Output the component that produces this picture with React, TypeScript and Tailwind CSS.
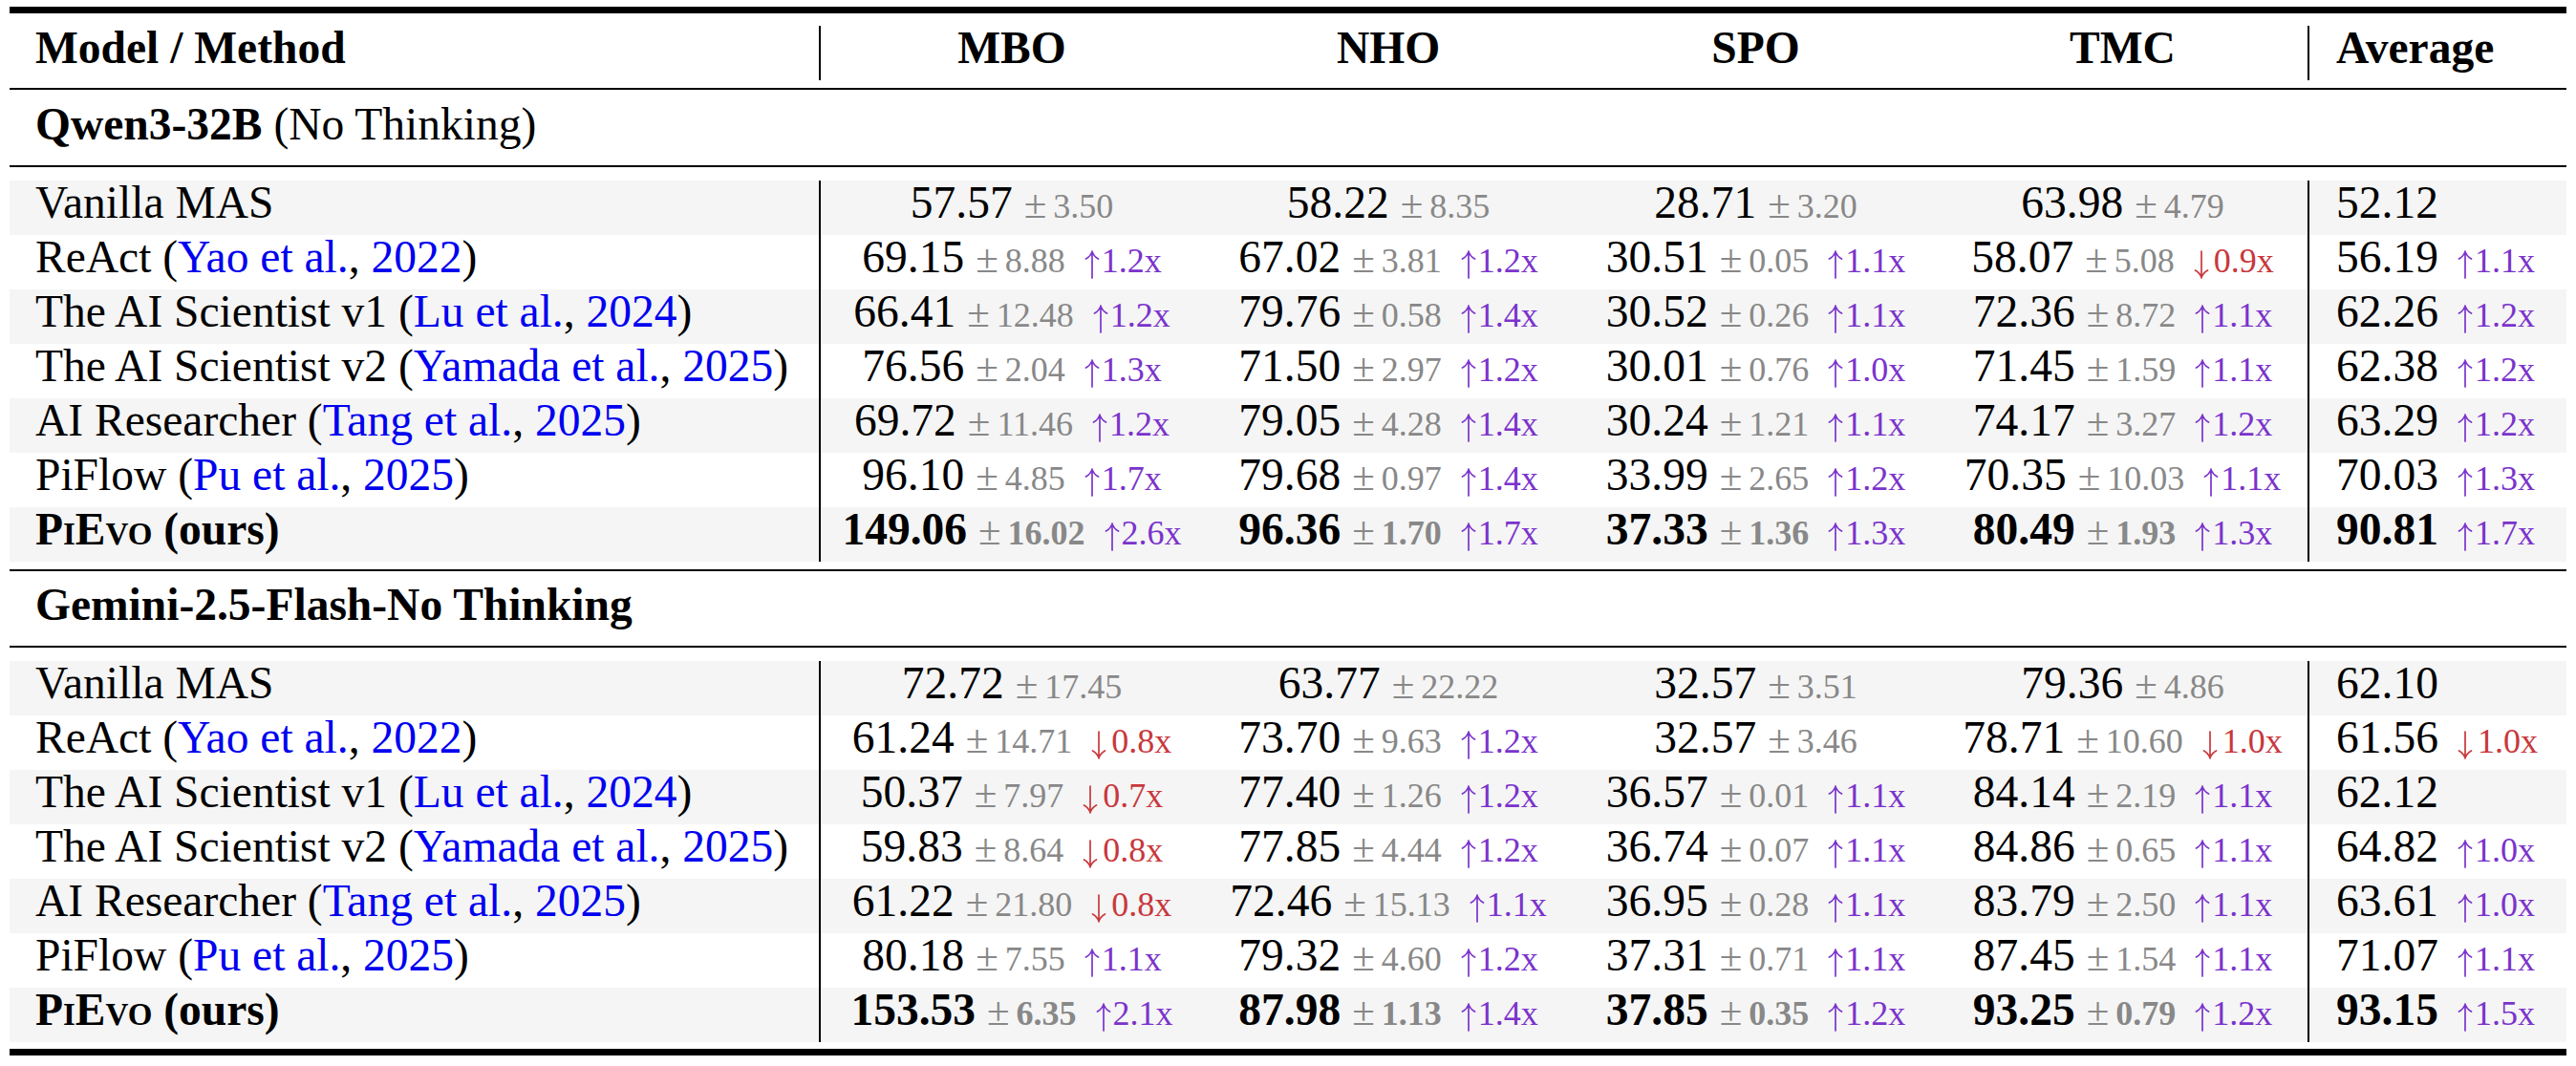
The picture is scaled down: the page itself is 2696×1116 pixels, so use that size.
import React from "react";

type Cell = [string, string?, string?];

type Row = {
  name: React.ReactNode;
  cells: Cell[];
  avg: [string, string?];
  bold?: boolean;
};

const cols = "grid grid-cols-[847px_402px_388px_381px_387px_271px]";

const cite = (who: string, year: string) => (
  <>
    {" "}(<span className="text-[#0000f0]">{who}</span>,{" "}
    <span className="text-[#0000f0]">{year}</span>)
  </>
);

const pievo = (
  <>
    <span className="[font-variant-caps:small-caps]">PiEvo</span> (ours)
  </>
);

// math-style arrow with curved barbs
const Arrow = ({ down }: { down: boolean }) => (
  <svg
    viewBox="0 0 18 30"
    className="inline-block h-[30px] w-[18px] align-[-7px]"
    fill="none"
    stroke="currentColor"
    strokeWidth="1.7"
    strokeLinecap="round"
  >
    {down ? (
      <path d="M9 1v27M2.5 21c3 1.6 5.2 4 6.5 7.5 1.3-3.5 3.5-5.9 6.5-7.5" />
    ) : (
      <path d="M9 29V2M2.5 9C5.5 7.4 7.7 5 9 1.5 10.3 5 12.5 7.4 15.5 9" />
    )}
  </svg>
);

const Ratio = ({ r }: { r: string }) => {
  const down = r.startsWith("↓");
  return (
    <span
      className={`ml-[19px] text-[36px] font-normal ${
        down ? "text-[#c8383c]" : "text-[#7b33cc]"
      }`}
    >
      <Arrow down={down} />
      <span className={down ? "ml-[4px]" : "ml-[1px]"}>{r.slice(1)}</span>
    </span>
  );
};

const Value = ({ v, sd, r }: { v: string; sd?: string; r?: string }) => (
  <>
    <span>{v}</span>
    {sd && (
      <span className="ml-[12px] text-[36px] text-[#888888]">
        <span className="mr-[7px] text-[43px] font-normal">±</span>
        {sd}
      </span>
    )}
    {r && <Ratio r={r} />}
  </>
);

const qwen: Row[] = [
  {
    name: "Vanilla MAS",
    cells: [["57.57", "3.50"], ["58.22", "8.35"], ["28.71", "3.20"], ["63.98", "4.79"]],
    avg: ["52.12"],
  },
  {
    name: <>ReAct{cite("Yao et al.", "2022")}</>,
    cells: [
      ["69.15", "8.88", "↑1.2x"],
      ["67.02", "3.81", "↑1.2x"],
      ["30.51", "0.05", "↑1.1x"],
      ["58.07", "5.08", "↓0.9x"],
    ],
    avg: ["56.19", "↑1.1x"],
  },
  {
    name: <>The AI Scientist v1{cite("Lu et al.", "2024")}</>,
    cells: [
      ["66.41", "12.48", "↑1.2x"],
      ["79.76", "0.58", "↑1.4x"],
      ["30.52", "0.26", "↑1.1x"],
      ["72.36", "8.72", "↑1.1x"],
    ],
    avg: ["62.26", "↑1.2x"],
  },
  {
    name: <>The AI Scientist v2{cite("Yamada et al.", "2025")}</>,
    cells: [
      ["76.56", "2.04", "↑1.3x"],
      ["71.50", "2.97", "↑1.2x"],
      ["30.01", "0.76", "↑1.0x"],
      ["71.45", "1.59", "↑1.1x"],
    ],
    avg: ["62.38", "↑1.2x"],
  },
  {
    name: <>AI Researcher{cite("Tang et al.", "2025")}</>,
    cells: [
      ["69.72", "11.46", "↑1.2x"],
      ["79.05", "4.28", "↑1.4x"],
      ["30.24", "1.21", "↑1.1x"],
      ["74.17", "3.27", "↑1.2x"],
    ],
    avg: ["63.29", "↑1.2x"],
  },
  {
    name: <>PiFlow{cite("Pu et al.", "2025")}</>,
    cells: [
      ["96.10", "4.85", "↑1.7x"],
      ["79.68", "0.97", "↑1.4x"],
      ["33.99", "2.65", "↑1.2x"],
      ["70.35", "10.03", "↑1.1x"],
    ],
    avg: ["70.03", "↑1.3x"],
  },
  {
    name: pievo,
    bold: true,
    cells: [
      ["149.06", "16.02", "↑2.6x"],
      ["96.36", "1.70", "↑1.7x"],
      ["37.33", "1.36", "↑1.3x"],
      ["80.49", "1.93", "↑1.3x"],
    ],
    avg: ["90.81", "↑1.7x"],
  },
];

const gemini: Row[] = [
  {
    name: "Vanilla MAS",
    cells: [["72.72", "17.45"], ["63.77", "22.22"], ["32.57", "3.51"], ["79.36", "4.86"]],
    avg: ["62.10"],
  },
  {
    name: <>ReAct{cite("Yao et al.", "2022")}</>,
    cells: [
      ["61.24", "14.71", "↓0.8x"],
      ["73.70", "9.63", "↑1.2x"],
      ["32.57", "3.46"],
      ["78.71", "10.60", "↓1.0x"],
    ],
    avg: ["61.56", "↓1.0x"],
  },
  {
    name: <>The AI Scientist v1{cite("Lu et al.", "2024")}</>,
    cells: [
      ["50.37", "7.97", "↓0.7x"],
      ["77.40", "1.26", "↑1.2x"],
      ["36.57", "0.01", "↑1.1x"],
      ["84.14", "2.19", "↑1.1x"],
    ],
    avg: ["62.12"],
  },
  {
    name: <>The AI Scientist v2{cite("Yamada et al.", "2025")}</>,
    cells: [
      ["59.83", "8.64", "↓0.8x"],
      ["77.85", "4.44", "↑1.2x"],
      ["36.74", "0.07", "↑1.1x"],
      ["84.86", "0.65", "↑1.1x"],
    ],
    avg: ["64.82", "↑1.0x"],
  },
  {
    name: <>AI Researcher{cite("Tang et al.", "2025")}</>,
    cells: [
      ["61.22", "21.80", "↓0.8x"],
      ["72.46", "15.13", "↑1.1x"],
      ["36.95", "0.28", "↑1.1x"],
      ["83.79", "2.50", "↑1.1x"],
    ],
    avg: ["63.61", "↑1.0x"],
  },
  {
    name: <>PiFlow{cite("Pu et al.", "2025")}</>,
    cells: [
      ["80.18", "7.55", "↑1.1x"],
      ["79.32", "4.60", "↑1.2x"],
      ["37.31", "0.71", "↑1.1x"],
      ["87.45", "1.54", "↑1.1x"],
    ],
    avg: ["71.07", "↑1.1x"],
  },
  {
    name: pievo,
    bold: true,
    cells: [
      ["153.53", "6.35", "↑2.1x"],
      ["87.98", "1.13", "↑1.4x"],
      ["37.85", "0.35", "↑1.2x"],
      ["93.25", "0.79", "↑1.2x"],
    ],
    avg: ["93.15", "↑1.5x"],
  },
];

const DataRow = ({ row, shaded }: { row: Row; shaded: boolean }) => (
  <div
    className={`${cols} h-[57px] leading-[47px] whitespace-nowrap ${
      shaded ? "bg-[#f5f5f5]" : ""
    } ${row.bold ? "font-bold" : ""}`}
  >
    <div className="pl-[27px]">{row.name}</div>
    {row.cells.map(([v, sd, r], i) => (
      <div key={i} className={`text-center ${i === 0 ? "border-l-2 border-black" : ""}`}>
        <Value v={v} sd={sd} r={r} />
      </div>
    ))}
    <div className="border-l-2 border-black pl-[28px]">
      <Value v={row.avg[0]} r={row.avg[1]} />
    </div>
  </div>
);

const Block = ({ rows }: { rows: Row[] }) => (
  <div className="pt-[14px]">
    {rows.map((row, i) => (
      <DataRow key={i} row={row} shaded={i % 2 === 0} />
    ))}
  </div>
);

export default function App() {
  return (
    <div className="min-h-screen bg-white pl-[10px] pt-[7px] [font-family:'Liberation_Serif','Times_New_Roman',serif] text-[47.5px] text-black">
      <div className="w-[2676px]">
        <div className="h-[7px] bg-black" />

        <div className={`${cols} pt-[13px] pb-[8px] font-bold`}>
          <div className="h-[57px] pl-[27px] leading-[47px]">Model / Method</div>
          <div className="h-[57px] border-l-2 border-black text-center leading-[47px]">MBO</div>
          <div className="h-[57px] text-center leading-[47px]">NHO</div>
          <div className="h-[57px] text-center leading-[47px]">SPO</div>
          <div className="h-[57px] text-center leading-[47px]">TMC</div>
          <div className="h-[57px] border-l-2 border-black pl-[28px] leading-[47px]">Average</div>
        </div>
        <div className="h-[2px] bg-black" />

        <div className="pt-[13px] pb-[9px] pl-[27px]">
          <div className="h-[57px] leading-[47px]">
            <span className="font-bold">Qwen3-32B</span> (No Thinking)
          </div>
        </div>
        <div className="h-[2px] bg-black" />
        <Block rows={qwen} />

        <div className="mt-[8px] h-[2px] bg-black" />
        <div className="pt-[12px] pb-[9px] pl-[27px]">
          <div className="h-[57px] font-bold leading-[47px]">Gemini-2.5-Flash-No Thinking</div>
        </div>
        <div className="h-[2px] bg-black" />
        <Block rows={gemini} />

        <div className="mt-[7px] h-[7px] bg-black" />
      </div>
    </div>
  );
}
